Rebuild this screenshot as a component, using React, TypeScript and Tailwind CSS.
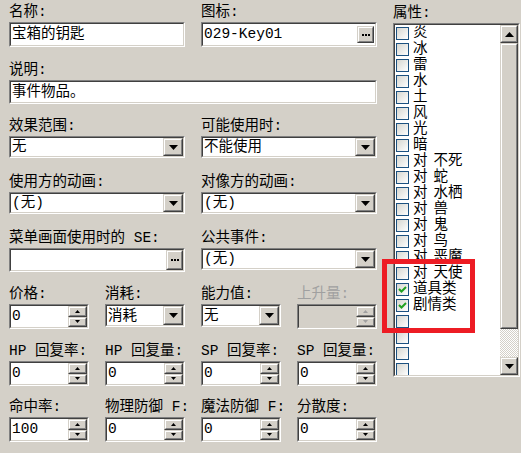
import React from "react";

const FONT = "font-['Liberation_Mono','Noto_Sans_CJK_SC',monospace]";

const Sunken: React.FC<{className?: string; disabled?: boolean; children?: React.ReactNode}> = ({
	className = "",
	disabled,
	children,
}) => (
	<div className={`border border-t-[#808080] border-l-[#808080] border-b-white border-r-white ${className}`}>
		<div
			className={`h-full flex items-center border border-t-[#404040] border-l-[#404040] border-b-[#d4d0c8] border-r-[#d4d0c8] ${
				disabled ? "bg-[#d4d0c8]" : "bg-white"
			}`}
		>
			{children}
		</div>
	</div>
);

const Raised: React.FC<{className?: string; children?: React.ReactNode}> = ({className = "", children}) => (
	<div className={`border border-t-[#d4d0c8] border-l-[#d4d0c8] border-b-[#404040] border-r-[#404040] ${className}`}>
		<div className="h-full flex items-center justify-center border border-t-white border-l-white border-b-[#808080] border-r-[#808080] bg-[#d4d0c8]">
			{children}
		</div>
	</div>
);

const Down = ({w = 9, color = "#000"}: {w?: number; color?: string}) => (
	<svg width={w} height={Math.ceil(w / 2)} viewBox={`0 0 ${w} ${Math.ceil(w / 2)}`}>
		<polygon points={`0,0 ${w},0 ${w / 2},${Math.ceil(w / 2)}`} fill={color} />
	</svg>
);

const Up = ({w = 9, color = "#000"}: {w?: number; color?: string}) => (
	<svg width={w} height={Math.ceil(w / 2)} viewBox={`0 0 ${w} ${Math.ceil(w / 2)}`}>
		<polygon points={`0,${Math.ceil(w / 2)} ${w},${Math.ceil(w / 2)} ${w / 2},0`} fill={color} />
	</svg>
);

const Dots = () => (
	<svg width="8" height="2" viewBox="0 0 8 2">
		<rect x="0" y="0" width="2" height="2" fill="#000" />
		<rect x="3" y="0" width="2" height="2" fill="#000" />
		<rect x="6" y="0" width="2" height="2" fill="#000" />
	</svg>
);

const Label: React.FC<{text: string; disabled?: boolean}> = ({text, disabled}) => (
	<div className={`h-[20px] leading-[20px] whitespace-pre ${disabled ? "text-[#a0a0a0]" : "text-black"}`}>{text}</div>
);

const Combo: React.FC<{value: string; className?: string}> = ({value, className = ""}) => (
	<Sunken className={`h-[22px] ${className}`}>
		<span className="flex-1 pl-[1px] leading-[18px]">{value}</span>
		<Raised className="h-full w-[20px]">
			<Down w={9} />
		</Raised>
	</Sunken>
);

const Spin: React.FC<{value?: string; disabled?: boolean}> = ({value = "", disabled}) => (
	<Sunken className="h-[25px] w-[80px]" disabled={disabled}>
		<span className="flex-1 pl-[1px] leading-[21px]">{value}</span>
		<div className="flex flex-col h-full w-[19px]">
			<Raised className="flex-1">
				<Up w={5} color={disabled ? "#a0a0a0" : "#000"} />
			</Raised>
			<Raised className="flex-1">
				<Down w={5} color={disabled ? "#a0a0a0" : "#000"} />
			</Raised>
		</div>
	</Sunken>
);

const Field: React.FC<{label: string; disabled?: boolean; children: React.ReactNode}> = ({label, disabled, children}) => (
	<div className="flex flex-col">
		<Label text={label} disabled={disabled} />
		{children}
	</div>
);

// "对" rows have a target name after a narrow gap
const attributes: Array<{label: string; target?: string; checked?: boolean}> = [
	{label: "炎"},
	{label: "冰"},
	{label: "雷"},
	{label: "水"},
	{label: "土"},
	{label: "风"},
	{label: "光"},
	{label: "暗"},
	{label: "对", target: "不死"},
	{label: "对", target: "蛇"},
	{label: "对", target: "水栖"},
	{label: "对", target: "兽"},
	{label: "对", target: "鬼"},
	{label: "对", target: "鸟"},
	{label: "对", target: "恶魔"},
	{label: "对", target: "天使"},
	{label: "道具类", checked: true},
	{label: "剧情类", checked: true},
	{label: ""},
	{label: ""},
	{label: ""},
	{label: ""},
];

const CheckBox: React.FC<{checked?: boolean}> = ({checked}) => (
	<div className="w-[13px] h-[13px] shrink-0 border border-[#1c5180] bg-linear-to-br from-[#d6d6d0] to-white flex items-center justify-center">
		{checked && (
			<svg width="9" height="9" viewBox="0 0 9 9">
				<polyline points="1,4 3.5,6.5 8,2" fill="none" stroke="#21a121" strokeWidth="2" />
			</svg>
		)}
	</div>
);

export default function App() {
	return (
		<div className={`relative w-[521px] h-[453px] overflow-hidden bg-[#d4d0c8] flex text-[14.5px] text-black ${FONT}`}>
			<div className="w-[393px] shrink-0 pl-[9px] flex flex-col">
				<div className="mt-[2px] flex gap-[16px]">
					<Field label="名称:">
						<Sunken className="w-[176px] h-[25px]">
							<span className="pl-[1px] leading-[21px]">宝箱的钥匙</span>
						</Sunken>
					</Field>
					<Field label="图标:">
						<Sunken className="w-[176px] h-[25px]">
							<span className="flex-1 pl-[1px] leading-[21px]">029-Key01</span>
							<Raised className="w-[17px] h-[17px] mr-[1px]">
								<Dots />
							</Raised>
						</Sunken>
					</Field>
				</div>

				<div className="mt-[13px]">
					<Field label="说明:">
						<Sunken className="w-[368px] h-[24px]">
							<span className="pl-[1px] leading-[20px]">事件物品。</span>
						</Sunken>
					</Field>
				</div>

				<div className="mt-[12px] flex gap-[16px]">
					<Field label="效果范围:">
						<Combo value="无" className="w-[176px]" />
					</Field>
					<Field label="可能使用时:">
						<Combo value="不能使用" className="w-[176px]" />
					</Field>
				</div>

				<div className="mt-[14px] flex gap-[16px]">
					<Field label="使用方的动画:">
						<Combo value="(无)" className="w-[176px]" />
					</Field>
					<Field label="对像方的动画:">
						<Combo value="(无)" className="w-[176px]" />
					</Field>
				</div>

				<div className="mt-[14px] flex gap-[16px]">
					<Field label="菜单画面使用时的 SE:">
						<Sunken className="w-[176px] h-[24px]">
							<span className="flex-1" />
							<Raised className="w-[17px] h-full">
								<Dots />
							</Raised>
						</Sunken>
					</Field>
					<Field label="公共事件:">
						<Combo value="(无)" className="w-[176px]" />
					</Field>
				</div>

				<div className="mt-[12px] grid grid-cols-[80px_80px_80px_80px] gap-x-[16px]">
					<Field label="价格:">
						<Spin value="0" />
					</Field>
					<Field label="消耗:">
						<Combo value="消耗" className="w-[80px] h-[23px]" />
					</Field>
					<Field label="能力值:">
						<Combo value="无" className="w-[80px] h-[23px]" />
					</Field>
					<Field label="上升量:" disabled>
						<Spin disabled />
					</Field>
				</div>

				<div className="mt-[12px] grid grid-cols-[80px_80px_80px_80px] gap-x-[16px]">
					<Field label="HP 回复率:">
						<Spin value="0" />
					</Field>
					<Field label="HP 回复量:">
						<Spin value="0" />
					</Field>
					<Field label="SP 回复率:">
						<Spin value="0" />
					</Field>
					<Field label="SP 回复量:">
						<Spin value="0" />
					</Field>
				</div>

				<div className="mt-[11px] grid grid-cols-[80px_80px_80px_80px] gap-x-[16px]">
					<Field label="命中率:">
						<Spin value="100" />
					</Field>
					<Field label="物理防御 F:">
						<Spin value="0" />
					</Field>
					<Field label="魔法防御 F:">
						<Spin value="0" />
					</Field>
					<Field label="分散度:">
						<Spin value="0" />
					</Field>
				</div>
			</div>

			<div className="flex flex-col mt-[3px]">
				<Label text="属性:" />
				<Sunken className="w-[127px] h-[354px]">
					<div className="flex h-full w-full items-stretch">
						<div className="flex-1 flex flex-col overflow-hidden">
							{attributes.map((a, idx) => (
								<div key={idx} className="h-[16px] shrink-0 flex items-center pl-[1px] gap-[4px]">
									<CheckBox checked={a.checked} />
									<span className="whitespace-pre leading-[16px]">
										{a.label}
										{a.target && <span className="ml-[6px]">{a.target}</span>}
									</span>
								</div>
							))}
						</div>
						<div className="w-[18px] flex flex-col">
							<Raised className="h-[18px]">
								<Up w={9} />
							</Raised>
							<Raised className="h-[286px]" />
							<div className="flex-1 bg-[repeating-conic-gradient(#d4d0c8_0_25%,#ffffff_0_50%)] bg-size-[2px_2px]" />
							<Raised className="h-[18px]">
								<Down w={9} />
							</Raised>
						</div>
					</div>
				</Sunken>
			</div>

			<div className="absolute left-[382px] top-[259px] w-[93px] h-[74px] border-[5px] border-[#ed1c24]" />
		</div>
	);
}
